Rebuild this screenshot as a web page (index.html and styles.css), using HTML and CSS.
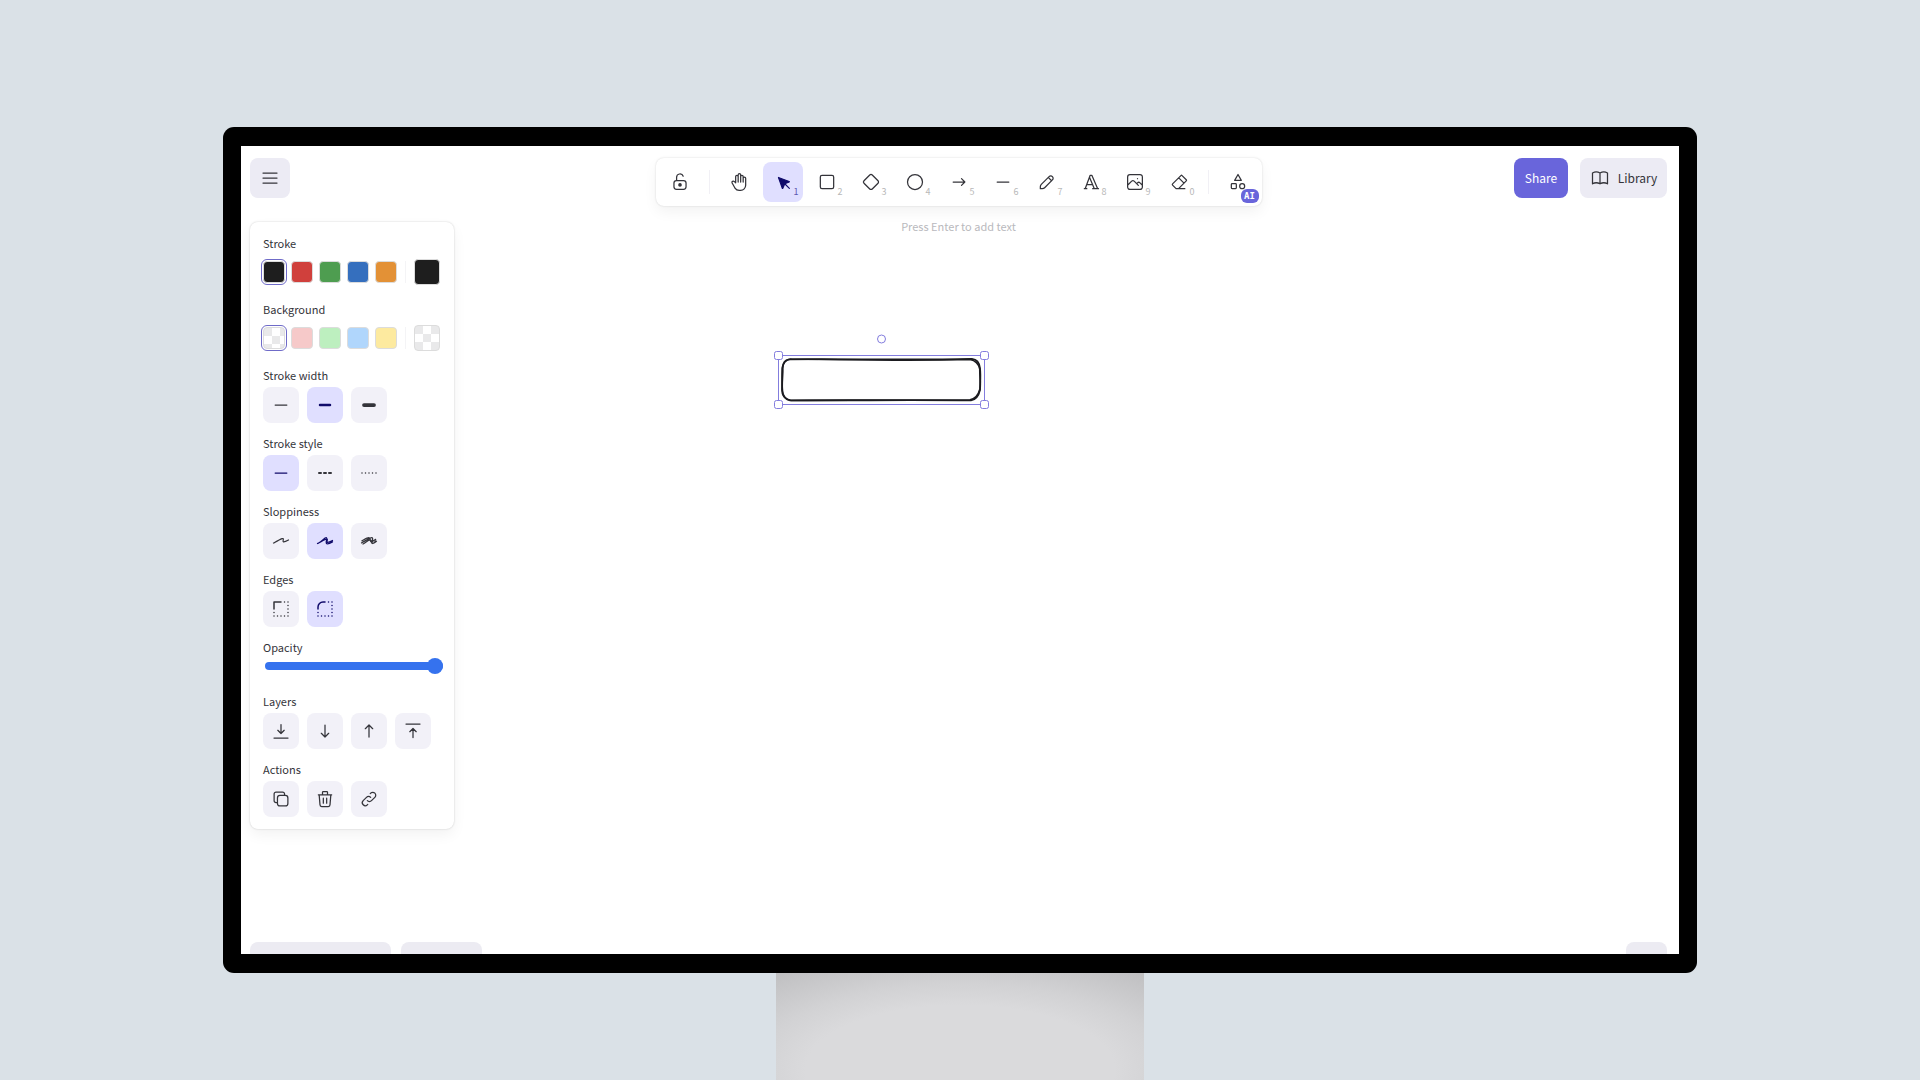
FILE: index.html
```html
<!DOCTYPE html>
<html lang="en">
<head>
<meta charset="utf-8">
<title>Whiteboard</title>
<link rel="stylesheet" href="styles.css">
</head>
<body>
<div class="scene">
  <div class="monitor">
    <div class="screen">
      <svg class="drawing" viewBox="0 0 224 82" width="224" height="82" aria-label="Selected rectangle">
        <g fill="none" stroke="#1b1b1f" stroke-linecap="round" stroke-linejoin="round">
          <path stroke-width="1.7" d="M20 29.300C70 28.800 150 30 203 28.800Q210 29.500 211 38C212 46 211 54 211 60Q209 69 202 70.500C150 69.800 80 70.600 22 70.300Q14 69.500 13.500 61C12.500 54 14 46 13.800 38Q14 30 20 29.300"/>
          <path stroke-width="1.7" d="M22 29C80 30 150 30.800 201 29.500Q209 31 210.800 39C210.800 48 211.800 54 211 59Q208.500 68.500 201 69.800C150 70.800 70 69.400 21 70.500Q13 68 13 60C13.300 54 12.800 46 13.200 38Q14.500 30 22 29"/>
        </g>
        <g fill="#fff" stroke="#837dde" stroke-width="1">
          <rect x="9.500" y="25.500" width="206" height="49" fill="none"/>
          <rect x="5.500" y="21.500" width="8" height="8" rx="2"/>
          <rect x="211.500" y="21.500" width="8" height="8" rx="2"/>
          <rect x="5.500" y="70.500" width="8" height="8" rx="2"/>
          <rect x="211.500" y="70.500" width="8" height="8" rx="2"/>
          <circle cx="112.500" cy="9" r="4"/>
        </g>
      </svg>

      <header class="topbar">
        <button class="menu-button" type="button" aria-label="Menu">
          <svg class="icon" viewBox="0 0 20 20"><path d="M3 5h14M3 10h14M3 15h14"/></svg>
        </button>
        <div class="toolbar" role="toolbar" aria-label="Tools">
          <button class="tool" type="button" aria-label="Keep tool active"><svg class="icon" viewBox="0 0 20 20"><path d="M13.542 8.542H6.458a2.500 2.500 0 0 0-2.500 2.500v3.750a2.500 2.500 0 0 0 2.500 2.500h7.084a2.500 2.500 0 0 0 2.500-2.500v-3.750a2.500 2.500 0 0 0-2.500-2.500Z"/><circle class="solid" cx="10" cy="12.900" r="1.200"/><path d="M6.600 8.400V5.300a3.400 3.400 0 0 1 6.600-1.100"/></svg></button>
          <span class="divider"></span>
          <div class="tool-group">
            <button class="tool" type="button" aria-label="Hand"><svg class="icon wide" viewBox="0 0 24 24"><path d="M8 13v-7.500a1.500 1.500 0 0 1 3 0v6.500M11 5.500v-2a1.500 1.500 0 1 1 3 0v8.500M14 5.500a1.500 1.500 0 0 1 3 0v6.500M17 7.500a1.500 1.500 0 0 1 3 0v8.500a6 6 0 0 1-6 6h-2h.208a6 6 0 0 1-5.012-2.700l-.196-.300c-.312-.479-1.407-2.388-3.286-5.728a1.500 1.500 0 0 1 .536-2.022a1.867 1.867 0 0 1 2.280.280l1.470 1.470"/></svg></button>
            <button class="tool active" type="button" aria-label="Selection" aria-pressed="true"><svg class="icon filled" viewBox="0 0 22 22"><path d="M6 6l4.153 11.793a.365.365 0 0 0 .331.207a.366.366 0 0 0 .332-.207l2.184-4.793l4.787-1.994a.355.355 0 0 0 .213-.323a.355.355 0 0 0-.213-.323l-11.787-4.360zM13.500 13.500l4.500 4.500"/></svg><span class="key">1</span></button>
            <button class="tool" type="button" aria-label="Rectangle"><svg class="icon wide" viewBox="0 0 24 24"><rect x="4" y="4" width="16" height="16" rx="2"/></svg><span class="key">2</span></button>
            <button class="tool" type="button" aria-label="Diamond"><svg class="icon wide" viewBox="0 0 24 24"><path d="M10.500 20.400l-6.900-6.900c-.781-.781-.781-2.219 0-3l6.900-6.900c.781-.781 2.219-.781 3 0l6.900 6.900c.781.781.781 2.219 0 3l-6.900 6.900c-.781.781-2.219.781-3 0z"/></svg><span class="key">3</span></button>
            <button class="tool" type="button" aria-label="Ellipse"><svg class="icon wide" viewBox="0 0 24 24"><circle cx="12" cy="12" r="9"/></svg><span class="key">4</span></button>
            <button class="tool" type="button" aria-label="Arrow"><svg class="icon wide" viewBox="0 0 24 24"><path d="M5 12h14M15 16l4-4M15 8l4 4"/></svg><span class="key">5</span></button>
            <button class="tool" type="button" aria-label="Line"><svg class="icon" viewBox="0 0 20 20"><path d="M4.167 10h11.666"/></svg><span class="key">6</span></button>
            <button class="tool" type="button" aria-label="Draw"><svg class="icon" viewBox="0 0 20 20"><path d="m7.643 15.690 7.774-7.773a2.357 2.357 0 1 0-3.334-3.334L4.310 12.357a3.333 3.333 0 0 0-.977 2.357v1.953h1.953c.884 0 1.732-.352 2.357-.977ZM11.250 5.417l3.333 3.333"/></svg><span class="key">7</span></button>
            <button class="tool" type="button" aria-label="Text"><svg class="icon wide" viewBox="0 0 24 24"><path d="M4 20h3M14 20h7M6.900 15h6.900M10.200 6.300L16 20M5 20l6-16h2l7 16"/></svg><span class="key">8</span></button>
            <button class="tool" type="button" aria-label="Image"><svg class="icon" viewBox="0 0 20 20"><path d="M12.500 6.667h.010M4.910 2.625h10.180a2.284 2.284 0 0 1 2.285 2.284v10.182a2.284 2.284 0 0 1-2.284 2.284H4.909a2.284 2.284 0 0 1-2.284-2.284V4.909a2.284 2.284 0 0 1 2.284-2.284ZM3.333 12.500l3.334-3.333c.773-.745 1.726-.745 2.500 0l4.166 4.166M11.667 11.667l.833-.834c.774-.744 1.726-.744 2.500 0l1.667 1.667"/></svg><span class="key">9</span></button>
            <button class="tool" type="button" aria-label="Eraser"><svg class="icon wide" viewBox="0 0 24 24"><path d="M19 20h-10.500l-4.210-4.300a1 1 0 0 1 0-1.410l10-10a1 1 0 0 1 1.410 0l5 5a1 1 0 0 1 0 1.410l-9.200 9.300M18 13.300l-6.300-6.300"/></svg><span class="key">0</span></button>
          </div>
          <span class="divider"></span>
          <button class="tool" type="button" aria-label="More tools"><svg class="icon wide" viewBox="0 0 24 24"><path d="M12 3l-4 7h8zM14 17a3 3 0 1 0 6 0a3 3 0 1 0-6 0M4 15a1 1 0 0 1 1-1h4a1 1 0 0 1 1 1v4a1 1 0 0 1-1 1h-4a1 1 0 0 1-1-1z"/></svg><span class="ai-badge">AI</span></button>
        </div>
        <div class="top-actions">
          <button class="share" type="button">Share</button>
          <button class="library" type="button"><svg class="icon wide" viewBox="0 0 24 24"><path d="M3 19a9 9 0 0 1 9 0a9 9 0 0 1 9 0M3 6a9 9 0 0 1 9 0a9 9 0 0 1 9 0M3 6v13M12 6v13M21 6v13"/></svg>Library</button>
        </div>
      </header>

      <main class="workspace">
        <aside class="panel" aria-label="Shape properties">
          <section class="field">
            <h2 class="label">Stroke</h2>
            <div class="swatches">
              <button class="swatch black selected" type="button" aria-label="Black"></button>
              <button class="swatch red" type="button" aria-label="Red"></button>
              <button class="swatch green" type="button" aria-label="Green"></button>
              <button class="swatch blue" type="button" aria-label="Blue"></button>
              <button class="swatch orange" type="button" aria-label="Orange"></button>
              <span class="swatch-divider"></span>
              <button class="swatch large black" type="button" aria-label="Current stroke"></button>
            </div>
          </section>
          <section class="field">
            <h2 class="label">Background</h2>
            <div class="swatches">
              <button class="swatch clear selected" type="button" aria-label="Transparent"></button>
              <button class="swatch pale-red" type="button" aria-label="Light red"></button>
              <button class="swatch pale-green" type="button" aria-label="Light green"></button>
              <button class="swatch pale-blue" type="button" aria-label="Light blue"></button>
              <button class="swatch pale-yellow" type="button" aria-label="Light yellow"></button>
              <span class="swatch-divider"></span>
              <button class="swatch large clear" type="button" aria-label="Current background"></button>
            </div>
          </section>
          <section class="field">
            <h2 class="label">Stroke width</h2>
            <div class="options">
              <button class="option" type="button" aria-label="Thin"><svg class="icon" viewBox="0 0 20 20"><path d="M4.167 10h11.666"/></svg></button>
              <button class="option active" type="button" aria-label="Bold" aria-pressed="true"><svg class="icon bold" viewBox="0 0 20 20"><path d="M5 10h10"/></svg></button>
              <button class="option" type="button" aria-label="Extra bold"><svg class="icon heavy" viewBox="0 0 20 20"><path d="M5 10h10"/></svg></button>
            </div>
          </section>
          <section class="field">
            <h2 class="label">Stroke style</h2>
            <div class="options">
              <button class="option active" type="button" aria-label="Solid" aria-pressed="true"><svg class="icon" viewBox="0 0 20 20"><path d="M4.167 10h11.666"/></svg></button>
              <button class="option" type="button" aria-label="Dashed"><svg class="icon dash" viewBox="0 0 20 20"><path d="M4 10h2M9 10h2M14 10h2"/></svg></button>
              <button class="option" type="button" aria-label="Dotted"><svg class="icon dots" viewBox="0 0 20 20"><path d="M3 10h.010M6.500 10h.010M10 10h.010M13.500 10h.010M17 10h.010"/></svg></button>
            </div>
          </section>
          <section class="field">
            <h2 class="label">Sloppiness</h2>
            <div class="options">
              <button class="option" type="button" aria-label="Architect"><svg class="icon" viewBox="0 0 20 20"><path d="M2.500 12.038c1.655-.885 5.900-3.292 8.568-4.354 2.668-1.063.101 2.821 1.320 3.104 1.218.283 5.112-1.814 5.112-1.814"/></svg></button>
              <button class="option active" type="button" aria-label="Artist" aria-pressed="true"><svg class="icon" viewBox="0 0 20 20"><path d="M2.500 12.563c1.655-.886 5.900-3.293 8.568-4.355 2.668-1.062.101 2.822 1.320 3.105 1.218.283 5.112-1.814 5.112-1.814m-13.469 2.230c2.963-1.586 6.130-5.620 7.468-4.998 1.338.623-1.153 4.110-.132 5.595 1.020 1.487 6.133-1.430 6.133-1.430"/></svg></button>
              <button class="option" type="button" aria-label="Cartoonist"><svg class="icon" viewBox="0 0 20 20"><path d="M2.500 11.936c1.737-.879 8.627-5.346 10.420-5.268 1.795.078-.418 5.138.345 5.736.763.598 3.530-1.789 4.235-2.147M2.929 9.788c1.164-.519 5.470-3.280 6.987-3.114 1.519.165 1 3.827 2.121 4.109 1.122.281 3.839-2.016 4.606-2.420M4 13c3-1.500 5-4.500 7.500-4.200 1.500.400.300 3.300 2 3.700 1.500 0 2.500-1.500 3-2.500"/></svg></button>
            </div>
          </section>
          <section class="field">
            <h2 class="label">Edges</h2>
            <div class="options">
              <button class="option" type="button" aria-label="Sharp"><svg class="icon corner" viewBox="0 0 20 20"><path d="M3 10V3h7"/><path class="dotted" d="M13.500 3h.010M17 3h.010M17 6.500h.010M17 10h.010M17 13.500h.010M17 17h.010M13.500 17h.010M10 17h.010M6.500 17h.010M3 17h.010M3 13.500h.010"/></svg></button>
              <button class="option active" type="button" aria-label="Round" aria-pressed="true"><svg class="icon corner" viewBox="0 0 20 20"><path d="M3 10V8a5 5 0 0 1 5-5h2"/><path class="dotted" d="M13.500 3h.010M17 3h.010M17 6.500h.010M17 10h.010M17 13.500h.010M17 17h.010M13.500 17h.010M10 17h.010M6.500 17h.010M3 17h.010M3 13.500h.010"/></svg></button>
            </div>
          </section>
          <div class="field opacity">
            <label class="label" for="opacity">Opacity</label>
            <input class="slider" id="opacity" type="range" min="0" max="100" value="100">
          </div>
          <section class="field">
            <h2 class="label">Layers</h2>
            <div class="options">
              <button class="option" type="button" aria-label="Send to back"><svg class="icon" viewBox="0 0 20 20"><path d="M3 17h14M10 3.500v9M6.800 9.300l3.200 3.200 3.200-3.200"/></svg></button>
              <button class="option" type="button" aria-label="Send backward"><svg class="icon" viewBox="0 0 20 20"><path d="M10 4v12M6.300 12.300l3.700 3.700 3.700-3.700"/></svg></button>
              <button class="option" type="button" aria-label="Bring forward"><svg class="icon" viewBox="0 0 20 20"><path d="M10 16V4M6.300 7.700l3.700-3.700 3.700 3.700"/></svg></button>
              <button class="option" type="button" aria-label="Bring to front"><svg class="icon" viewBox="0 0 20 20"><path d="M3 3h14M10 16.500v-9M6.800 10.700l3.200-3.200 3.200 3.200"/></svg></button>
            </div>
          </section>
          <section class="field">
            <h2 class="label">Actions</h2>
            <div class="options">
              <button class="option" type="button" aria-label="Duplicate"><svg class="icon" viewBox="0 0 20 20"><path d="M14.375 6.458H8.958a2.500 2.500 0 0 0-2.500 2.500v5.417a2.500 2.500 0 0 0 2.500 2.500h5.417a2.500 2.500 0 0 0 2.500-2.500V8.958a2.500 2.500 0 0 0-2.500-2.500ZM6.459 13.542H5A1.870 1.870 0 0 1 3.125 11.667V5A1.870 1.870 0 0 1 5 3.125h6.667A1.870 1.870 0 0 1 13.542 5v1.458"/></svg></button>
              <button class="option" type="button" aria-label="Delete"><svg class="icon" viewBox="0 0 20 20"><path d="M3.333 5.833h13.334M8.333 9.167v5M11.667 9.167v5M4.167 5.833l.833 10c0 .920.746 1.667 1.667 1.667h6.666c.920 0 1.667-.746 1.667-1.667l.833-10M7.500 5.833v-2.500c0-.460.373-.833.833-.833h3.334c.460 0 .833.373.833.833v2.500"/></svg></button>
              <button class="option" type="button" aria-label="Link"><svg class="icon" viewBox="0 0 20 20"><path d="M8.333 11.667a2.917 2.917 0 0 0 4.167 0l3.333-3.334a2.946 2.946 0 1 0-4.166-4.166l-.417.416M11.667 8.333a2.917 2.917 0 0 0-4.167 0l-3.333 3.334a2.946 2.946 0 0 0 4.166 4.166l.417-.416"/></svg></button>
            </div>
          </section>
        </aside>
        <p class="hint">Press Enter to add text</p>
      </main>

      <footer class="bottombar">
        <span class="pill zoom"></span>
        <span class="pill history"></span>
        <span class="pill help"></span>
      </footer>
    </div>
  </div>
  <div class="stand"></div>
</div>
</body>
</html>
```
FILE: styles.css
```css
* {
  box-sizing: border-box;
}

body {
  margin: 0;
  background: #dae1e7;
  color: #34343a;
  font: 12px/16px "Noto Sans CJK SC", "Noto Sans", sans-serif;
}

button {
  display: flex;
  align-items: center;
  justify-content: center;
  padding: 0;
  border: 0;
  color: inherit;
  font: inherit;
}

.scene {
  display: grid;
  grid-template-rows: 1fr 107px;
  min-height: 100vh;
  padding-top: 127px;
}

.monitor {
  display: flex;
  margin: 0 223px;
  padding: 19px 18px;
  border-radius: 11px;
  background: #000;
}

.screen {
  position: relative;
  display: flex;
  flex: 1;
  flex-direction: column;
  padding: 12px 12px 0 9px;
  overflow: hidden;
  background: #fff;
}

.stand {
  justify-self: center;
  width: 368px;
  background: radial-gradient(ellipse 70% 100% at 50% 90%, #dadadc 60%, #d2d2d4 80%, #bababc 125%);
}

.drawing {
  position: absolute;
  top: 184px;
  left: 528px;
}

.icon {
  flex: none;
  width: 20px;
  height: 20px;
  fill: none;
  stroke: currentColor;
  stroke-width: 1.25;
  stroke-linecap: round;
  stroke-linejoin: round;
}

.icon.wide { stroke-width: 1.5; }
.icon.filled { fill: currentColor; }
.icon .solid { fill: currentColor; }
.icon.bold { stroke-width: 2.5; }
.icon.heavy { stroke-width: 3.75; }
.icon.dash { stroke-width: 2; }
.icon.dots { stroke-width: 1.5; }
.icon.corner { stroke-width: 1.5; }
.icon .dotted { stroke-width: 1.5; }

.topbar,
.workspace {
  display: grid;
  grid-template-columns: 1fr auto 1fr;
  align-items: start;
}

.menu-button {
  width: 40px;
  height: 40px;
  border-radius: 8px;
  background: #ecebf4;
}

.toolbar {
  display: flex;
  align-items: center;
  padding: 4px;
  border-radius: 8px;
  background: #fff;
  box-shadow: 0 0 2px rgba(0, 0, 0, 0.16), 0 6px 14px rgba(0, 0, 0, 0.05);
}

.tool-group {
  display: flex;
  gap: 4px;
}

.divider {
  width: 1px;
  height: 24px;
  margin: 0 9px;
  background: #f1f0f5;
}

.tool {
  position: relative;
  width: 40px;
  height: 40px;
  border-radius: 8px;
  background: transparent;
}

.active,
.tool.active {
  background: #e0dfff;
  color: #100b6b;
}

.key {
  position: absolute;
  right: 4px;
  bottom: 4px;
  color: #b8b8b8;
  font-size: 9px;
  line-height: 12px;
}

.active .key {
  color: #5b57b0;
}

.ai-badge {
  position: absolute;
  right: -1px;
  bottom: -1px;
  width: 18px;
  border-radius: 6px;
  background: #6965db;
  color: #fff;
  font: bold 9px/14px "DejaVu Sans Mono", monospace;
  text-align: center;
}

.top-actions {
  display: flex;
  justify-content: flex-end;
  gap: 12px;
}

.share,
.library {
  height: 40px;
  border-radius: 8px;
}

.share {
  width: 54px;
  background: #6965db;
  color: #fff;
}

.library {
  gap: 8px;
  width: 87px;
  background: #ecebf4;
}

.workspace {
  flex: 1;
}

.hint {
  margin: 12px 0 0;
  color: #b9b9bd;
  font-size: 11px;
}

.panel {
  display: flex;
  flex-direction: column;
  gap: 12px;
  justify-self: start;
  width: 204px;
  margin-top: 16px;
  padding: 13px 12px 12px 13px;
  border-radius: 8px;
  background: #fff;
  box-shadow: 0 0 2px rgba(0, 0, 0, 0.2), 0 6px 14px rgba(0, 0, 0, 0.05);
}

.field {
  display: flex;
  flex-direction: column;
  gap: 4px;
}

.label {
  margin: 0;
  font-size: 11px;
  font-weight: 400;
  line-height: 16px;
}

.swatches {
  display: flex;
  align-items: center;
  gap: 6px;
  height: 34px;
}

.swatch {
  width: 22px;
  height: 22px;
  border: 1px solid #dcdcdc;
  border-radius: 4px;
}

.swatch.large {
  width: 26px;
  height: 26px;
}

.swatch.selected {
  outline: 1px solid #6f6bc8;
  outline-offset: 1px;
}

.swatch-divider {
  width: 1px;
  height: 22px;
  margin: 0 2px;
  background: #f4f4f6;
}

.black { background: #1e1e1e; }
.red { background: #d0403c; }
.green { background: #4e9d50; }
.blue { background: #356fbe; }
.orange { background: #e39136; }
.pale-red { background: #f6c9c9; }
.pale-green { background: #bdefbf; }
.pale-blue { background: #b0d6fc; }
.pale-yellow { background: #fdea9f; }
.clear { background: repeating-conic-gradient(#fff 0 25%, #e9e9ea 0 50%) 0 0 / 16px 16px; }

.options {
  display: flex;
  gap: 8px;
}

.option {
  width: 36px;
  height: 36px;
  border-radius: 8px;
  background: #f2f1f8;
}

.option.active {
  background: #e0dfff;
}

.opacity {
  gap: 3px;
  padding-bottom: 7px;
}

.slider {
  width: calc(100% - 1px);
  height: 16px;
  margin: 0 0 0 2px;
  appearance: none;
  background: transparent;
}

.slider::-webkit-slider-runnable-track {
  height: 8px;
  border-radius: 4px;
  background: #3572ee;
}

.slider::-webkit-slider-thumb {
  width: 16px;
  height: 16px;
  margin-top: -4px;
  border-radius: 50%;
  appearance: none;
  background: #3572ee;
}

.bottombar {
  display: flex;
  gap: 10px;
  height: 12px;
}

.pill {
  height: 12px;
  border-radius: 8px 8px 0 0;
  background: #ecebf2;
}

.zoom { width: 141px; }
.history { width: 81px; }
.help {
  width: 41px;
  margin-left: auto;
}
```
